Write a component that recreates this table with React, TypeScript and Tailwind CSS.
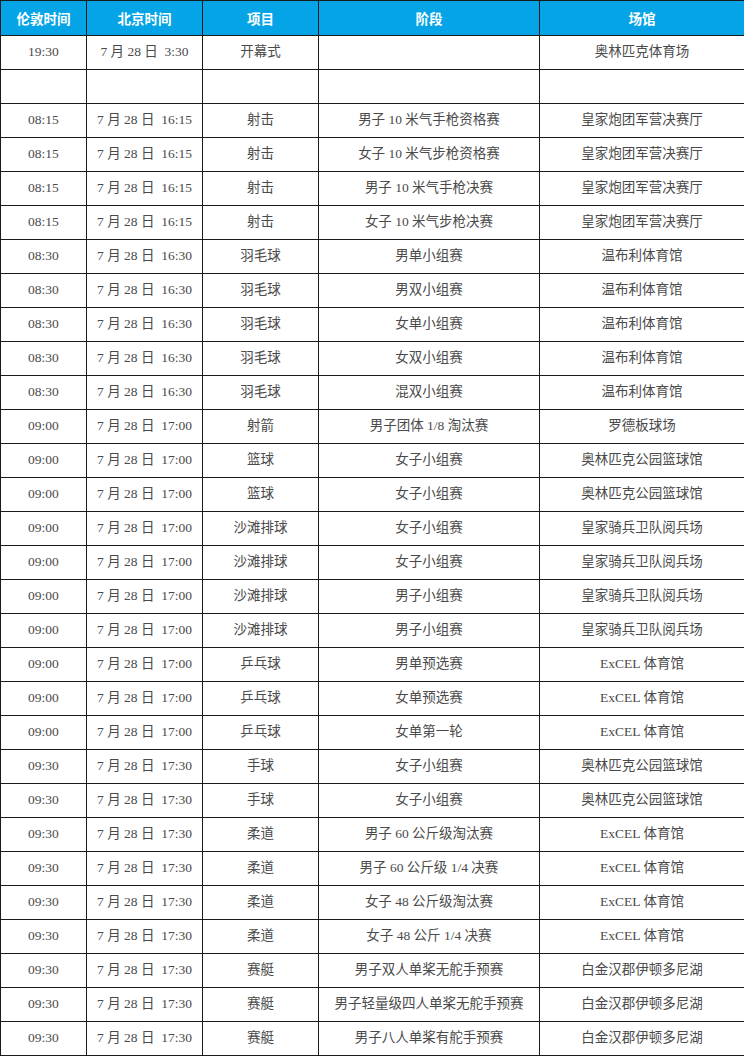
const rows: string[][] = [
  ["19:30", "7 月 28 日  3:30", "开幕式", "", "奥林匹克体育场"],
  ["", "", "", "", ""],
  ["08:15", "7 月 28 日  16:15", "射击", "男子 10 米气手枪资格赛", "皇家炮团军营决赛厅"],
  ["08:15", "7 月 28 日  16:15", "射击", "女子 10 米气步枪资格赛", "皇家炮团军营决赛厅"],
  ["08:15", "7 月 28 日  16:15", "射击", "男子 10 米气手枪决赛", "皇家炮团军营决赛厅"],
  ["08:15", "7 月 28 日  16:15", "射击", "女子 10 米气步枪决赛", "皇家炮团军营决赛厅"],
  ["08:30", "7 月 28 日  16:30", "羽毛球", "男单小组赛", "温布利体育馆"],
  ["08:30", "7 月 28 日  16:30", "羽毛球", "男双小组赛", "温布利体育馆"],
  ["08:30", "7 月 28 日  16:30", "羽毛球", "女单小组赛", "温布利体育馆"],
  ["08:30", "7 月 28 日  16:30", "羽毛球", "女双小组赛", "温布利体育馆"],
  ["08:30", "7 月 28 日  16:30", "羽毛球", "混双小组赛", "温布利体育馆"],
  ["09:00", "7 月 28 日  17:00", "射箭", "男子团体 1/8 淘汰赛", "罗德板球场"],
  ["09:00", "7 月 28 日  17:00", "篮球", "女子小组赛", "奥林匹克公园篮球馆"],
  ["09:00", "7 月 28 日  17:00", "篮球", "女子小组赛", "奥林匹克公园篮球馆"],
  ["09:00", "7 月 28 日  17:00", "沙滩排球", "女子小组赛", "皇家骑兵卫队阅兵场"],
  ["09:00", "7 月 28 日  17:00", "沙滩排球", "女子小组赛", "皇家骑兵卫队阅兵场"],
  ["09:00", "7 月 28 日  17:00", "沙滩排球", "男子小组赛", "皇家骑兵卫队阅兵场"],
  ["09:00", "7 月 28 日  17:00", "沙滩排球", "男子小组赛", "皇家骑兵卫队阅兵场"],
  ["09:00", "7 月 28 日  17:00", "乒乓球", "男单预选赛", "ExCEL 体育馆"],
  ["09:00", "7 月 28 日  17:00", "乒乓球", "女单预选赛", "ExCEL 体育馆"],
  ["09:00", "7 月 28 日  17:00", "乒乓球", "女单第一轮", "ExCEL 体育馆"],
  ["09:30", "7 月 28 日  17:30", "手球", "女子小组赛", "奥林匹克公园篮球馆"],
  ["09:30", "7 月 28 日  17:30", "手球", "女子小组赛", "奥林匹克公园篮球馆"],
  ["09:30", "7 月 28 日  17:30", "柔道", "男子 60 公斤级淘汰赛", "ExCEL 体育馆"],
  ["09:30", "7 月 28 日  17:30", "柔道", "男子 60 公斤级 1/4 决赛", "ExCEL 体育馆"],
  ["09:30", "7 月 28 日  17:30", "柔道", "女子 48 公斤级淘汰赛", "ExCEL 体育馆"],
  ["09:30", "7 月 28 日  17:30", "柔道", "女子 48 公斤 1/4 决赛", "ExCEL 体育馆"],
  ["09:30", "7 月 28 日  17:30", "赛艇", "男子双人单桨无舵手预赛", "白金汉郡伊顿多尼湖"],
  ["09:30", "7 月 28 日  17:30", "赛艇", "男子轻量级四人单桨无舵手预赛", "白金汉郡伊顿多尼湖"],
  ["09:30", "7 月 28 日  17:30", "赛艇", "男子八人单桨有舵手预赛", "白金汉郡伊顿多尼湖"],
];

const heads = ["伦敦时间", "北京时间", "项目", "阶段", "场馆"];

export default function App() {
  return (
    <div className="w-[744px] h-[1059px] bg-white">
      <table className="table-fixed border-collapse w-[744px]">
        <colgroup>
          <col className="w-[86px]" />
          <col className="w-[116px]" />
          <col className="w-[116px]" />
          <col className="w-[221px]" />
          <col className="w-[205px]" />
        </colgroup>
        <thead>
          <tr className="h-[35px]">
            {heads.map((h) => (
              <th
                key={h}
                className="border border-[#1a1a1a] bg-[#05a4e6] text-white text-[13.5px] font-bold p-0 text-center align-middle font-['Noto_Sans_CJK_SC',sans-serif]"
              >
                {h}
              </th>
            ))}
          </tr>
        </thead>
        <tbody>
          {rows.map((r, i) => (
            <tr key={i} className="h-[34px]">
              {r.map((c, j) => (
                <td
                  key={j}
                  className="border border-[#1a1a1a] text-[#4a4a4a] text-[13.5px] p-0 text-center align-middle whitespace-pre font-['Liberation_Serif','Noto_Sans_CJK_SC',serif]"
                >
                  {c}
                </td>
              ))}
            </tr>
          ))}
        </tbody>
      </table>
    </div>
  );
}
